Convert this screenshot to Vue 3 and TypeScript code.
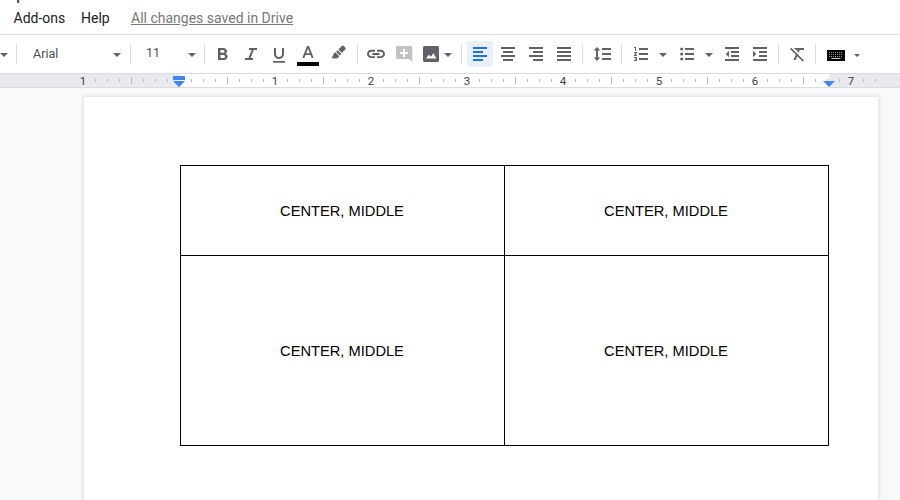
<script setup lang="ts">
interface Tick {
  kind: 'label' | 'half' | 'minor'
  text: string
}

// One entry per eighth of an inch, from the left page edge to the right one.
const ticks: Tick[] = Array.from({ length: 67 }, (_, i) => {
  if (i % 8 === 0) {
    const inch = i / 8 - 1
    return { kind: 'label', text: inch === 0 ? '' : String(Math.abs(inch)) }
  }
  return { kind: i % 4 === 0 ? 'half' : 'minor', text: '' }
})

const rows: string[][] = [
  ['CENTER, MIDDLE', 'CENTER, MIDDLE'],
  ['CENTER, MIDDLE', 'CENTER, MIDDLE'],
]
</script>

<template>
  <div class="app">
    <header class="menubar">
      <span class="title-tail">p</span>
      <nav class="menu">
        <span class="menu-item addons">Add-ons</span>
        <span class="menu-item help">Help</span>
        <span class="saved">All changes saved in Drive</span>
      </nav>
    </header>

    <div class="toolbar">
      <span class="cell"><i class="caret"></i></span>
      <span class="cell"><i class="sep"></i></span>
      <span class="font-name">Arial</span>
      <span class="cell"><i class="caret"></i></span>
      <span class="cell"><i class="sep"></i></span>
      <span class="font-size">11</span>
      <span class="cell"><i class="caret"></i></span>
      <span class="cell"><i class="sep"></i></span>
      <span class="cell">
        <svg class="icon" viewBox="0 0 18 18"><path fill-rule="evenodd" d="M4 3h5.2c2.3 0 3.8 1.3 3.8 3.2 0 1.2-.6 2-1.5 2.5 1.300.4 2.100 1.500 2.100 2.900C13.600 13.700 12 15 9.700 15H4zM6.500 5.100v2.700h2.400c1 0 1.600-.5 1.600-1.350S9.900 5.100 8.900 5.100zM6.500 9.900v3h2.700c1.100 0 1.800-.5 1.800-1.500s-.7-1.500-1.800-1.500z" /></svg>
      </span>
      <span class="cell">
        <svg class="icon" viewBox="0 0 18 18"><path d="M7 3v2h2.600l-3.200 8H3v2h8v-2H8.600l3.200-8H15V3z" /></svg>
      </span>
      <span class="cell">
        <svg class="icon" viewBox="0 0 18 18"><path d="M9 14c2.800 0 5-2.200 5-5V3h-2v6c0 1.750-1.300 3-3 3S6 10.750 6 9V3H4v6c0 2.800 2.200 5 5 5zM3 16h12v1.700H3z" /></svg>
      </span>
      <span class="cell">
        <svg class="icon wide" viewBox="0 0 22 24"><path fill-rule="evenodd" d="M10 4h2l4.700 12h-2.100l-1.100-3h-5L7.400 16H5.300zm1 2.500L9.200 11.200h3.600z" /><path class="ink" d="M0 20h22v4H0z" /></svg>
      </span>
      <span class="cell">
        <svg class="icon" viewBox="0 0 18 18"><path d="M2.500 13.300 4.300 10c.3-1.100.8-2.300 2-2.700l3.700 3.800c-.2 1.700-1.300 2.300-2.800 2.400zM7 6.700l1.700-1.500 3.600 3.700-1.600 1.600zM9.400 4.600l3.400-3.500c.6-.6 1.500-.6 2.100 0l1.300 1.300c.6.6.6 1.500 0 2.100l-3.400 3.500z" /></svg>
      </span>
      <span class="cell"><i class="sep"></i></span>
      <span class="cell">
        <svg class="icon" viewBox="0 0 18 18"><path d="M8 13H4.300C2 13 0 11.200 0 9s2-4.200 4.300-4.200H8v1.900H4.500C3.100 6.700 2 7.600 2 9s1.100 2.200 2.500 2.200H8zM10 4.800h3.700C16 4.800 18 6.800 18 9s-2 4-4.300 4H10v-1.800h3.500C14.900 11.200 16 10.400 16 9s-1.100-2.300-2.500-2.300H10zM5.500 8h7v2h-7z" /></svg>
      </span>
      <span class="cell">
        <svg class="icon muted" viewBox="0 0 18 18"><path fill-rule="evenodd" d="M2.500 1h13.300c.8 0 1.500.7 1.500 1.500V17l-3-3H2.500C1.700 14 1 13.300 1 12.500v-10C1 1.700 1.700 1 2.500 1zM8 4v3H5v2h3v3h2V9h3V7h-3V4z" /></svg>
      </span>
      <span class="cell">
        <svg class="icon" viewBox="0 0 18 18"><path fill-rule="evenodd" d="M2.500 1h13c.8 0 1.500.7 1.500 1.500v13c0 .8-.7 1.500-1.500 1.500h-13C1.700 17 1 16.300 1 15.500v-13C1 1.700 1.700 1 2.500 1zM4 13.500h10.500L11.400 8.200 8.800 11.800 6.800 9.800z" /></svg>
      </span>
      <span class="cell"><i class="caret tight"></i></span>
      <span class="cell"><i class="sep"></i></span>
      <span class="cell selected">
        <svg class="icon" viewBox="0 0 18 18"><path d="M2 2h14v2H2zM2 6h10v2H2zM2 10h14v2H2zM2 14h10v2H2z" /></svg>
      </span>
      <span class="cell">
        <svg class="icon" viewBox="0 0 18 18"><path d="M2 2h14v2H2zM4 6h10v2H4zM2 10h14v2H2zM4 14h10v2H4z" /></svg>
      </span>
      <span class="cell">
        <svg class="icon" viewBox="0 0 18 18"><path d="M2 2h14v2H2zM6 6h10v2H6zM2 10h14v2H2zM6 14h10v2H6z" /></svg>
      </span>
      <span class="cell">
        <svg class="icon" viewBox="0 0 18 18"><path d="M2 2h14v2H2zM2 6h14v2H2zM2 10h14v2H2zM2 14h14v2H2z" /></svg>
      </span>
      <span class="cell"><i class="sep"></i></span>
      <span class="cell">
        <svg class="icon" viewBox="0 0 18 18"><path d="M9 3h9v2H9zM9 8h9v2H9zM9 13h9v2H9zM4 2l3.300 3.400H5v7.200h2.300L4 16 .7 12.600H3V5.400H.7z" /></svg>
      </span>
      <span class="cell"><i class="sep"></i></span>
      <span class="cell">
        <svg class="icon" viewBox="0 0 18 18"><path d="M7 3h9v2H7zM7 8h9v2H7zM7 13h9v2H7zM2 2h2v4H3V3H2zM2 7h3v1L3.300 10H5v1H2v-1l1.700-2H2zM2 12h3v4H2v-1h2v-.5H3v-1h1V13H2z" /></svg>
      </span>
      <span class="cell"><i class="caret tight"></i></span>
      <span class="cell">
        <svg class="icon" viewBox="0 0 18 18"><path d="M7 3h9v2H7zM7 8h9v2H7zM7 13h9v2H7z" /><circle cx="3.700" cy="4" r="1.600" /><circle cx="3.700" cy="9" r="1.600" /><circle cx="3.700" cy="14" r="1.600" /></svg>
      </span>
      <span class="cell"><i class="caret tight"></i></span>
      <span class="cell">
        <svg class="icon" viewBox="0 0 18 18"><path d="M2 2h14v2H2zM8 6h8v2H8zM8 10h8v2H8zM2 14h14v2H2zM6 5.700v6.600L2.700 9z" /></svg>
      </span>
      <span class="cell">
        <svg class="icon" viewBox="0 0 18 18"><path d="M2 2h14v2H2zM8 6h8v2H8zM8 10h8v2H8zM2 14h14v2H2zM2 5.700v6.600L5.300 9z" /></svg>
      </span>
      <span class="cell"><i class="sep"></i></span>
      <span class="cell">
        <svg class="icon" viewBox="0 0 18 18"><path d="M6 3h10v2h-4.300l-1.200 2.800L9 6.300 9.500 5H7.700zM3.200 2.800 16 15.400 14.800 16.600 9.300 11.200 7.600 15H5.400l2.400-5.300L2 4z" /></svg>
      </span>
      <span class="cell"><i class="sep"></i></span>
      <span class="cell">
        <svg class="icon keyboard" viewBox="0 0 18 18">
          <path class="ink" d="M0 5h18v11H0z" />
          <path class="keys" d="M2 7.500h14M2 9.500h14M2 11.500h14" />
          <path class="space" d="M4.500 13.500h9" />
        </svg>
      </span>
      <span class="cell"><i class="caret small"></i></span>
    </div>

    <div class="ruler">
      <div class="margin-left"></div>
      <div class="measure"></div>
      <div class="margin-right"></div>
      <div class="ticks">
        <span v-for="(tick, i) in ticks" :key="i" class="tick" :class="tick.kind">{{ tick.text }}</span>
      </div>
      <svg class="marker start" viewBox="0 0 12 11"><path d="M0 0h12v4H0zM0 5h12L6 11z" /></svg>
      <svg class="marker end" viewBox="0 0 12 11"><path d="M0 5h12L6 11z" /></svg>
    </div>

    <main class="canvas">
      <article class="page">
        <div class="table">
          <template v-for="(row, r) in rows" :key="r">
            <div v-for="(text, c) in row" :key="c" class="td">{{ text }}</div>
          </template>
        </div>
      </article>
    </main>
  </div>
</template>

<style>
body {
  margin: 0;
  overflow: hidden;
}
</style>

<style scoped>
.app {
  width: 900px;
  height: 500px;
  display: flex;
  flex-direction: column;
  overflow: hidden;
  background: #f8f9fa;
  font-family: Roboto, "Liberation Sans", sans-serif;
}
.menubar {
  position: relative;
  box-sizing: border-box;
  flex: 0 0 35px;
  overflow: hidden;
  background: #fff;
  border-bottom: 1px solid #dadce0;
}
.title-tail {
  position: absolute;
  left: 16px;
  top: -17px;
  font-size: 18px;
  line-height: 20px;
  color: #202124;
}
.menu {
  display: flex;
  padding: 8px 0 0 13.5px;
  font-size: 14px;
  line-height: 20px;
  color: #202124;
  white-space: nowrap;
}
.addons {
  width: 67.5px;
}
.help {
  width: 50px;
}
.saved {
  color: #777;
  text-decoration: underline;
}
.toolbar {
  flex: 0 0 39px;
  box-sizing: border-box;
  display: grid;
  grid-template-columns:
    7px 19px 81px 20px 7px 53px 10px 15px
    22px 34px 22px 36px 24px 15px
    22px 34px 20px 15px 11px
    26px 30px 26px 30px 7px 32px 7px
    32px 13px 34px 11px 34px 22px 15px
    22px 15px 26px 15px;
  align-items: center;
  background: #fff;
  border-bottom: 1px solid #dadce0;
  color: #5f6368;
}
.cell {
  display: flex;
  justify-content: center;
  align-items: center;
  height: 26px;
}
.selected {
  background: #e8f0fe;
  border-radius: 2px;
  color: #1a73e8;
}
.sep {
  width: 1px;
  height: 20px;
  background: #dadce0;
}
.caret {
  flex: none;
  border: 4px solid transparent;
  border-top-color: #5f6368;
  border-bottom: 0;
  margin-top: 2px;
}
.caret.tight {
  margin-right: 1px;
}
.caret.small {
  border-width: 3px 3px 0;
  margin-top: 3px;
}
.icon {
  flex: none;
  width: 18px;
  height: 18px;
  fill: currentColor;
}
.wide {
  width: 22px;
  height: 24px;
}
.muted {
  fill: #c1c2c4;
}
.ink {
  fill: #000;
}
.keys {
  stroke: #999;
  stroke-width: 1;
  stroke-dasharray: 1 1;
}
.space {
  stroke: #ccc;
  stroke-width: 1;
}
.font-name,
.font-size {
  font-size: 12.5px;
  line-height: 18px;
  color: #4c5055;
}
.font-name {
  padding-left: 7px;
}
.font-size {
  padding: 0 0 2px 12px;
}
.ruler {
  position: relative;
  box-sizing: border-box;
  flex: 0 0 14px;
  display: flex;
  border-bottom: 1px solid #dadce0;
}
.margin-left {
  width: 180px;
  background: #e8eaed;
}
.measure {
  width: 649px;
  background: #fff;
}
.margin-right {
  flex: 1;
  background: #e8eaed;
}
.ticks {
  position: absolute;
  left: 77px;
  top: 0;
  display: flex;
  align-items: center;
  height: 13px;
}
.tick {
  width: 12px;
  display: flex;
  justify-content: center;
  font-size: 11.5px;
  line-height: 13px;
  color: #3c4043;
}
.label {
  padding-top: 1px;
}
.half::before,
.minor::before {
  content: "";
  width: 1px;
  margin-left: 1px;
  background: #b5b8bc;
}
.half::before {
  height: 7px;
}
.minor::before {
  height: 3px;
}
.marker {
  position: absolute;
  top: 2px;
  width: 12px;
  height: 11px;
  fill: #4285f4;
}
.start {
  left: 173px;
}
.end {
  left: 823px;
}
.canvas {
  flex: 1;
  padding: 9px 0 0 84px;
}
.page {
  box-sizing: border-box;
  width: 794px;
  height: 500px;
  padding: 68px 0 0 96px;
  background: #fff;
  box-shadow: 0 0 3px 1px rgba(60, 64, 67, 0.15);
}
.table {
  display: grid;
  grid-template-columns: 324px 324px;
  grid-template-rows: 90px 190px;
  width: 648px;
  border-top: 1px solid #000;
  border-left: 1px solid #000;
}
.td {
  box-sizing: border-box;
  display: flex;
  align-items: center;
  justify-content: center;
  padding-right: 1px;
  border-right: 1px solid #000;
  border-bottom: 1px solid #000;
  font-family: "Liberation Sans", Arial, sans-serif;
  font-size: 14.667px;
  color: #000;
}
</style>
